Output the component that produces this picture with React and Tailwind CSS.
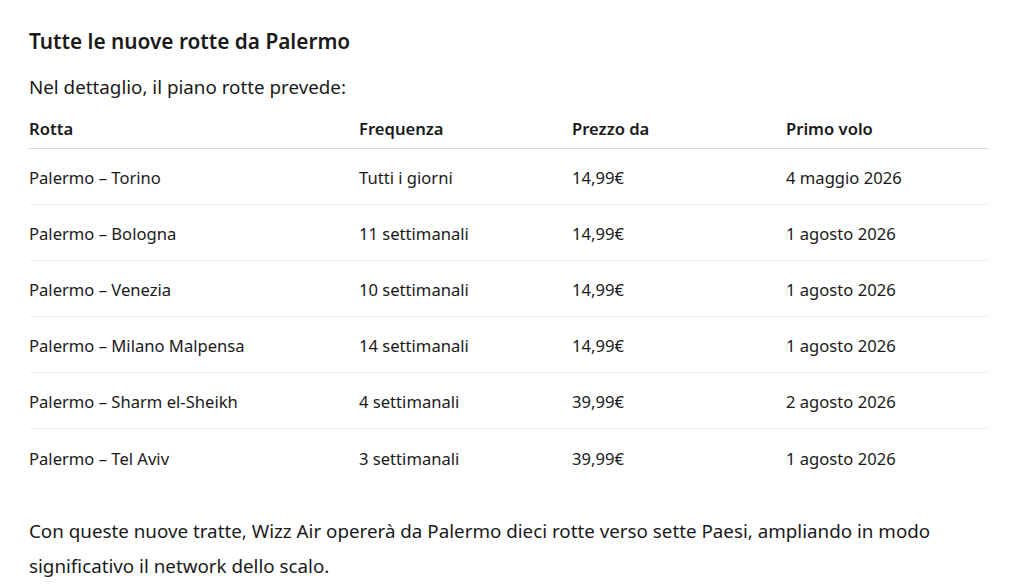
import React from "react";

const routes = [
  { rotta: "Palermo – Torino", freq: "Tutti i giorni", prezzo: "14,99€", volo: "4 maggio 2026" },
  { rotta: "Palermo – Bologna", freq: "11 settimanali", prezzo: "14,99€", volo: "1 agosto 2026" },
  { rotta: "Palermo – Venezia", freq: "10 settimanali", prezzo: "14,99€", volo: "1 agosto 2026" },
  { rotta: "Palermo – Milano Malpensa", freq: "14 settimanali", prezzo: "14,99€", volo: "1 agosto 2026" },
  { rotta: "Palermo – Sharm el-Sheikh", freq: "4 settimanali", prezzo: "39,99€", volo: "2 agosto 2026" },
  { rotta: "Palermo – Tel Aviv", freq: "3 settimanali", prezzo: "39,99€", volo: "1 agosto 2026" },
];

const App = () => {
  return (
    <div className="min-h-screen bg-white text-[#1a1a1a] font-['Noto_Sans',sans-serif] px-[29px] pt-[26px]">
      {/* Heading */}
      <h2 className="text-[20.8px] font-semibold leading-[30px]">Tutte le nuove rotte da Palermo</h2>
      <p className="text-[18.8px] leading-[30px] mt-[16px]">Nel dettaglio, il piano rotte prevede:</p>

      {/* Routes table */}
      <div className="w-[960px] mt-[10px] text-[16.6px]">
        <div className="grid grid-cols-[330px_213px_214px_203px] h-[37px] items-center pb-[2px] border-b border-[#dcdcdc] font-semibold">
          <div>Rotta</div>
          <div>Frequenza</div>
          <div>Prezzo da</div>
          <div>Primo volo</div>
        </div>
        {routes.map((r, i) => (
          <div
            key={r.rotta}
            className={
              "grid grid-cols-[330px_213px_214px_203px] h-[56px] items-center pt-[4px] " +
              (i < routes.length - 1 ? "border-b border-[#f0f0f0]" : "")
            }
          >
            <div>{r.rotta}</div>
            <div>{r.freq}</div>
            <div>{r.prezzo}</div>
            <div>{r.volo}</div>
          </div>
        ))}
      </div>

      <p className="text-[18.8px] leading-[35px] mt-[29px] w-[960px]">
        Con queste nuove tratte, Wizz Air opererà da Palermo dieci rotte verso sette Paesi, ampliando in modo
        significativo il network dello scalo.
      </p>
    </div>
  );
};

export default App;
